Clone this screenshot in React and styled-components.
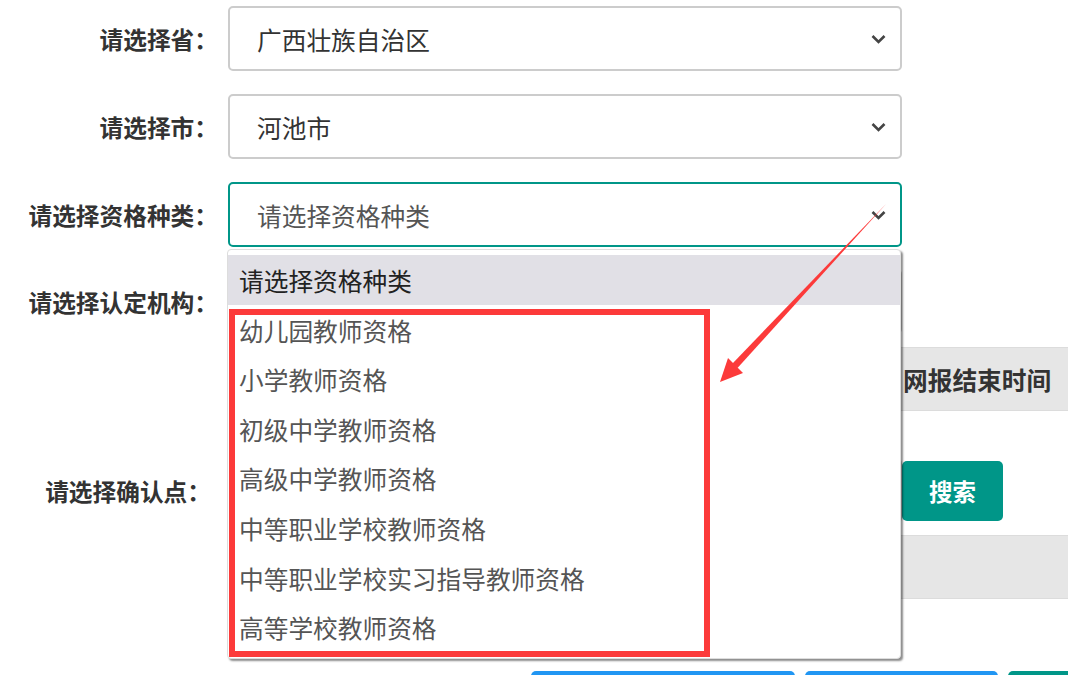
import styled, { createGlobalStyle } from 'styled-components';

const GlobalStyle = createGlobalStyle`
  html, body {
    margin: 0;
    padding: 0;
    background: #fff;
  }
  body {
    font-family: "Noto Sans CJK SC", "Noto Sans", sans-serif;
    color: #333;
  }
`;

const Page = styled.div`
  position: relative;
  width: 1068px;
  height: 675px;
  overflow: hidden;
  padding-top: 6px;
  box-sizing: border-box;
`;

const Row = styled.div`
  display: grid;
  grid-template-columns: 228px 674px auto;
  align-items: center;
  height: 65px;
  margin-bottom: ${(p) => p.$gap ?? 23}px;
  margin-top: ${(p) => p.$top ?? 0}px;
`;

const Label = styled.div`
  text-align: right;
  padding-right: ${(p) => p.$pad ?? 10}px;
  font-size: 23.7px;
  font-weight: 700;
  color: #333;
  white-space: nowrap;
`;

const SelectWrap = styled.div`
  position: relative;
  height: 100%;
`;

const Select = styled.div`
  box-sizing: border-box;
  height: 100%;
  border: 2px solid ${(p) => (p.$focused ? '#009688' : '#ccc')};
  border-radius: 5px;
  display: flex;
  align-items: center;
  justify-content: space-between;
  padding: 0 14px 0 27px;
  font-size: 24.7px;
  color: ${(p) => (p.$placeholder ? '#555' : '#333')};
  background: #fff;
`;

const Chevron = () => (
  <svg width="15" height="10" viewBox="0 0 15 10">
    <path d="M1.5 2 L7.5 8 L13.5 2" fill="none" stroke="#444" strokeWidth="2.6" />
  </svg>
);

const Dropdown = styled.div`
  position: absolute;
  left: -1px;
  top: calc(100% + 2px);
  width: 674px;
  height: 410px;
  box-sizing: border-box;
  padding-top: 5px;
  background: #fff;
  border: 1px solid #ddd;
  border-radius: 4px;
  box-shadow: 2px 2px 2px rgba(0, 0, 0, 0.45);
  z-index: 5;
`;

const Option = styled.div`
  height: 49.6px;
  line-height: 51px;
  padding-left: 11px;
  font-size: 24.7px;
  color: ${(p) => (p.$active ? '#222' : '#555')};
  background: ${(p) => (p.$active ? '#e1e0e6' : 'transparent')};
  white-space: nowrap;
`;

const Highlight = styled.div`
  position: absolute;
  left: 1px;
  top: 59px;
  width: 481px;
  height: 348px;
  box-sizing: border-box;
  border: 6px solid #fc3a3a;
  pointer-events: none;
`;

const Band = styled.div`
  margin-left: 228px;
  height: ${(p) => p.$h}px;
  margin-top: ${(p) => p.$top}px;
  background: #e6e6e6;
  border-top: 1px solid #dcdcdc;
  border-bottom: 1px solid #dcdcdc;
  box-sizing: border-box;
  display: grid;
  grid-template-columns: 674px 1fr;
  align-items: center;
`;

const HeadCell = styled.div`
  font-size: 24.7px;
  font-weight: 700;
  color: #333;
  white-space: nowrap;
  padding-left: 1px;
`;

const SearchButton = styled.button`
  margin-left: 0;
  width: 101px;
  height: 60px;
  border: none;
  border-radius: 5px;
  background: #009688;
  color: #fff;
  font-family: inherit;
  font-size: 23.5px;
  font-weight: 700;
`;

const ButtonRow = styled.div`
  display: flex;
  gap: 10px;
  padding-left: 531px;
  margin-top: 72px;
`;

const ActionButton = styled.div`
  width: ${(p) => p.$w}px;
  height: 40px;
  border-radius: 5px;
  background: ${(p) => p.$color};
  flex-shrink: 0;
`;

const Overlay = styled.svg`
  position: absolute;
  left: 0;
  top: 0;
  pointer-events: none;
  z-index: 10;
`;

const options = [
  '请选择资格种类',
  '幼儿园教师资格',
  '小学教师资格',
  '初级中学教师资格',
  '高级中学教师资格',
  '中等职业学校教师资格',
  '中等职业学校实习指导教师资格',
  '高等学校教师资格',
];

const App = () => (
  <Page>
    <GlobalStyle />
    <Row>
      <Label>请选择省：</Label>
      <Select>
        广西壮族自治区
        <Chevron />
      </Select>
    </Row>
    <Row>
      <Label>请选择市：</Label>
      <Select>
        河池市
        <Chevron />
      </Select>
    </Row>
    <Row $gap={22}>
      <Label>请选择资格种类：</Label>
      <SelectWrap>
        <Select $focused $placeholder>
          请选择资格种类
          <Chevron />
        </Select>
        <Dropdown>
          {options.map((o, i) => (
            <Option key={o} $active={i === 0}>
              {o}
            </Option>
          ))}
          <Highlight />
        </Dropdown>
      </SelectWrap>
    </Row>
    <Row $gap={0}>
      <Label>请选择认定机构：</Label>
      <Select $placeholder>
        <span />
        <Chevron />
      </Select>
    </Row>
    <Band $h={64} $top={13}>
      <HeadCell />
      <HeadCell>网报结束时间</HeadCell>
    </Band>
    <Row $top={47} $gap={0}>
      <Label $pad={17}>请选择确认点：</Label>
      <Select $placeholder>
        <span />
        <Chevron />
      </Select>
      <SearchButton>搜索</SearchButton>
    </Row>
    <Band $h={64} $top={12} />
    <ButtonRow>
      <ActionButton $w={264} $color="#2196f3" />
      <ActionButton $w={193} $color="#2196f3" />
      <ActionButton $w={120} $color="#009688" />
    </ButtonRow>
    <Overlay width="1068" height="675" viewBox="0 0 1068 675">
      <polygon points="886,204 737.5,368 732.5,363.5" fill="#fc3a3a" />
      <polygon points="720,382 728,358 743,373" fill="#fc3a3a" />
    </Overlay>
  </Page>
);

export default App;
